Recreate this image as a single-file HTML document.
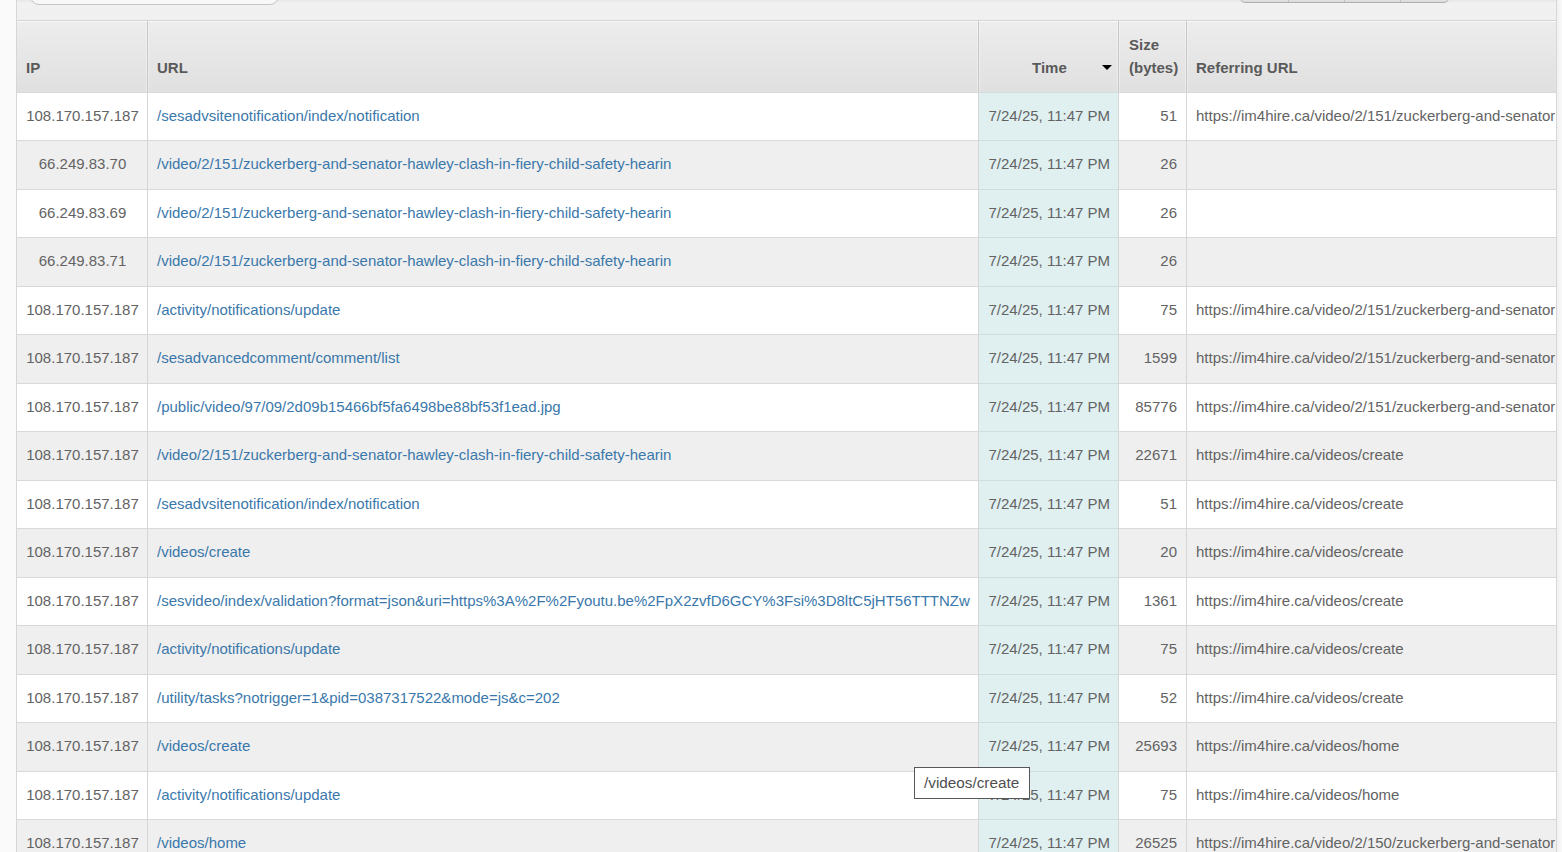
<!DOCTYPE html>
<html><head><meta charset="utf-8">
<style>
html,body{margin:0;padding:0;}
body{width:1562px;height:852px;overflow:hidden;position:relative;background:#fafafa;font-family:"Liberation Sans",sans-serif;font-size:15px;color:#636363;}
#tb{position:absolute;left:16px;top:0;width:1541px;height:20px;background:linear-gradient(#e6e6e6 0,#f1f1f1 3px,#f0f0f0 20px);}
#search{position:absolute;left:30px;top:-19px;width:249px;height:24px;border:1px solid #c4c4c4;border-radius:9px;background:#f8f8f8;box-sizing:border-box;}
#btns{position:absolute;left:1240px;top:-20px;width:209px;height:23px;border:1px solid #bdbdbd;border-bottom-color:#b0b0b0;border-radius:5px;background:linear-gradient(#f2f2f2 60%,#dcdcdc);box-sizing:border-box;}
#rs{position:absolute;left:1557px;top:0;width:5px;height:852px;background:linear-gradient(to right,#f1f1f1,#fafafa);}
#btns i{position:absolute;top:0;bottom:0;width:1px;background:#c4c4c4;}
#hd{position:absolute;left:16px;top:20px;width:1541px;height:73px;border-top:1px solid #d4d4d4;border-bottom:1px solid #c9c9c9;box-sizing:border-box;background:linear-gradient(#ededed,#e0e0e0);box-shadow:inset 0 1px 0 #fafafa;}
.h{position:absolute;top:0;height:71px;font-weight:bold;color:#5a5a5a;}
.vl{position:absolute;top:92px;width:1px;height:760px;background:#d6d6d6;}
.hv{position:absolute;top:21px;width:1px;height:71px;background:#c6c6c6;box-shadow:-1px 0 0 rgba(255,255,255,.35),1px 0 0 rgba(255,255,255,.35);}
.r{position:absolute;left:16px;width:1541px;background:#fff;border-top:1px solid #d9d9d9;box-sizing:border-box;}
.r.odd{background:#efefef;}
.c{position:absolute;top:0;bottom:0;line-height:46px;white-space:nowrap;overflow:hidden;}
.ip{left:1px;width:131px;text-align:center;}
.url{left:131px;width:831px;padding-left:10px;box-sizing:border-box;}
.url a{color:#3a78ab;}
.tm{top:-1px;border-top:1px solid #d0dddd;left:962px;width:140px;text-align:right;padding-right:8px;box-sizing:border-box;background:#e0f0f1;}
.sz{left:1102px;width:68px;text-align:right;padding-right:9px;box-sizing:border-box;}
.ref{left:1170px;width:369px;padding-left:10px;box-sizing:border-box;}
#tip{position:absolute;left:914px;top:767px;width:116px;height:32px;border:1px solid #575757;background:#fff;box-sizing:border-box;font-size:15.3px;color:#4f4f4f;line-height:29px;padding-left:9px;}
</style></head><body>
<div id="tb"></div>
<div id="rs"></div>
<div id="search"></div>
<div id="btns"><i style="left:47px"></i><i style="left:103px"></i><i style="left:159px"></i></div>
<div id="hd">
 <div class="h" style="left:10px;line-height:94px">IP</div>
 <div class="h" style="left:141px;line-height:94px">URL</div>
 <div class="h" style="left:1016px;line-height:94px">Time</div>
 <div style="position:absolute;left:1086px;top:44px;width:0;height:0;border-left:5px solid transparent;border-right:5px solid transparent;border-top:5px solid #000"></div>
 <div class="h" style="left:1113px;top:12px;line-height:23px">Size<br>(bytes)</div>
 <div class="h" style="left:1180px;line-height:94px">Referring URL</div>
</div>
<div class="r" style="top:92px;height:48px"><div class="c ip">108.170.157.187</div><div class="c url"><a>/sesadvsitenotification/index/notification</a></div><div class="c tm">7/24/25, 11:47 PM</div><div class="c sz">51</div><div class="c ref">https://im4hire.ca/video/2/151/zuckerberg-and-senator-hawley-clash</div></div>
<div class="r odd" style="top:140px;height:49px"><div class="c ip">66.249.83.70</div><div class="c url"><a>/video/2/151/zuckerberg-and-senator-hawley-clash-in-fiery-child-safety-hearin</a></div><div class="c tm">7/24/25, 11:47 PM</div><div class="c sz">26</div><div class="c ref"></div></div>
<div class="r" style="top:189px;height:48px"><div class="c ip">66.249.83.69</div><div class="c url"><a>/video/2/151/zuckerberg-and-senator-hawley-clash-in-fiery-child-safety-hearin</a></div><div class="c tm">7/24/25, 11:47 PM</div><div class="c sz">26</div><div class="c ref"></div></div>
<div class="r odd" style="top:237px;height:49px"><div class="c ip">66.249.83.71</div><div class="c url"><a>/video/2/151/zuckerberg-and-senator-hawley-clash-in-fiery-child-safety-hearin</a></div><div class="c tm">7/24/25, 11:47 PM</div><div class="c sz">26</div><div class="c ref"></div></div>
<div class="r" style="top:286px;height:48px"><div class="c ip">108.170.157.187</div><div class="c url"><a>/activity/notifications/update</a></div><div class="c tm">7/24/25, 11:47 PM</div><div class="c sz">75</div><div class="c ref">https://im4hire.ca/video/2/151/zuckerberg-and-senator-hawley-clash</div></div>
<div class="r odd" style="top:334px;height:49px"><div class="c ip">108.170.157.187</div><div class="c url"><a>/sesadvancedcomment/comment/list</a></div><div class="c tm">7/24/25, 11:47 PM</div><div class="c sz">1599</div><div class="c ref">https://im4hire.ca/video/2/151/zuckerberg-and-senator-hawley-clash</div></div>
<div class="r" style="top:383px;height:48px"><div class="c ip">108.170.157.187</div><div class="c url"><a>/public/video/97/09/2d09b15466bf5fa6498be88bf53f1ead.jpg</a></div><div class="c tm">7/24/25, 11:47 PM</div><div class="c sz">85776</div><div class="c ref">https://im4hire.ca/video/2/151/zuckerberg-and-senator-hawley-clash</div></div>
<div class="r odd" style="top:431px;height:49px"><div class="c ip">108.170.157.187</div><div class="c url"><a>/video/2/151/zuckerberg-and-senator-hawley-clash-in-fiery-child-safety-hearin</a></div><div class="c tm">7/24/25, 11:47 PM</div><div class="c sz">22671</div><div class="c ref">https://im4hire.ca/videos/create</div></div>
<div class="r" style="top:480px;height:48px"><div class="c ip">108.170.157.187</div><div class="c url"><a>/sesadvsitenotification/index/notification</a></div><div class="c tm">7/24/25, 11:47 PM</div><div class="c sz">51</div><div class="c ref">https://im4hire.ca/videos/create</div></div>
<div class="r odd" style="top:528px;height:49px"><div class="c ip">108.170.157.187</div><div class="c url"><a>/videos/create</a></div><div class="c tm">7/24/25, 11:47 PM</div><div class="c sz">20</div><div class="c ref">https://im4hire.ca/videos/create</div></div>
<div class="r" style="top:577px;height:48px"><div class="c ip">108.170.157.187</div><div class="c url"><a>/sesvideo/index/validation?format=json&amp;uri=https%3A%2F%2Fyoutu.be%2FpX2zvfD6GCY%3Fsi%3D8ltC5jHT56TTTNZw</a></div><div class="c tm">7/24/25, 11:47 PM</div><div class="c sz">1361</div><div class="c ref">https://im4hire.ca/videos/create</div></div>
<div class="r odd" style="top:625px;height:49px"><div class="c ip">108.170.157.187</div><div class="c url"><a>/activity/notifications/update</a></div><div class="c tm">7/24/25, 11:47 PM</div><div class="c sz">75</div><div class="c ref">https://im4hire.ca/videos/create</div></div>
<div class="r" style="top:674px;height:48px"><div class="c ip">108.170.157.187</div><div class="c url"><a>/utility/tasks?notrigger=1&amp;pid=0387317522&amp;mode=js&amp;c=202</a></div><div class="c tm">7/24/25, 11:47 PM</div><div class="c sz">52</div><div class="c ref">https://im4hire.ca/videos/create</div></div>
<div class="r odd" style="top:722px;height:49px"><div class="c ip">108.170.157.187</div><div class="c url"><a>/videos/create</a></div><div class="c tm">7/24/25, 11:47 PM</div><div class="c sz">25693</div><div class="c ref">https://im4hire.ca/videos/home</div></div>
<div class="r" style="top:771px;height:48px"><div class="c ip">108.170.157.187</div><div class="c url"><a>/activity/notifications/update</a></div><div class="c tm">7/24/25, 11:47 PM</div><div class="c sz">75</div><div class="c ref">https://im4hire.ca/videos/home</div></div>
<div class="r odd" style="top:819px;height:48px"><div class="c ip">108.170.157.187</div><div class="c url"><a>/videos/home</a></div><div class="c tm">7/24/25, 11:47 PM</div><div class="c sz">26525</div><div class="c ref">https://im4hire.ca/video/2/150/zuckerberg-and-senator-hawley-clash</div></div>
<div class="vl" style="left:16px;top:0;height:852px"></div>
<div class="vl" style="left:147px"></div>
<div class="vl" style="left:978px"></div>
<div class="vl" style="left:1118px"></div>
<div class="vl" style="left:1186px"></div>
<div class="vl" style="left:1556px;top:0;height:852px"></div>
<div class="hv" style="left:147px"></div>
<div class="hv" style="left:978px"></div>
<div class="hv" style="left:1118px"></div>
<div class="hv" style="left:1186px"></div>
<div id="tip">/videos/create</div>
</body></html>
